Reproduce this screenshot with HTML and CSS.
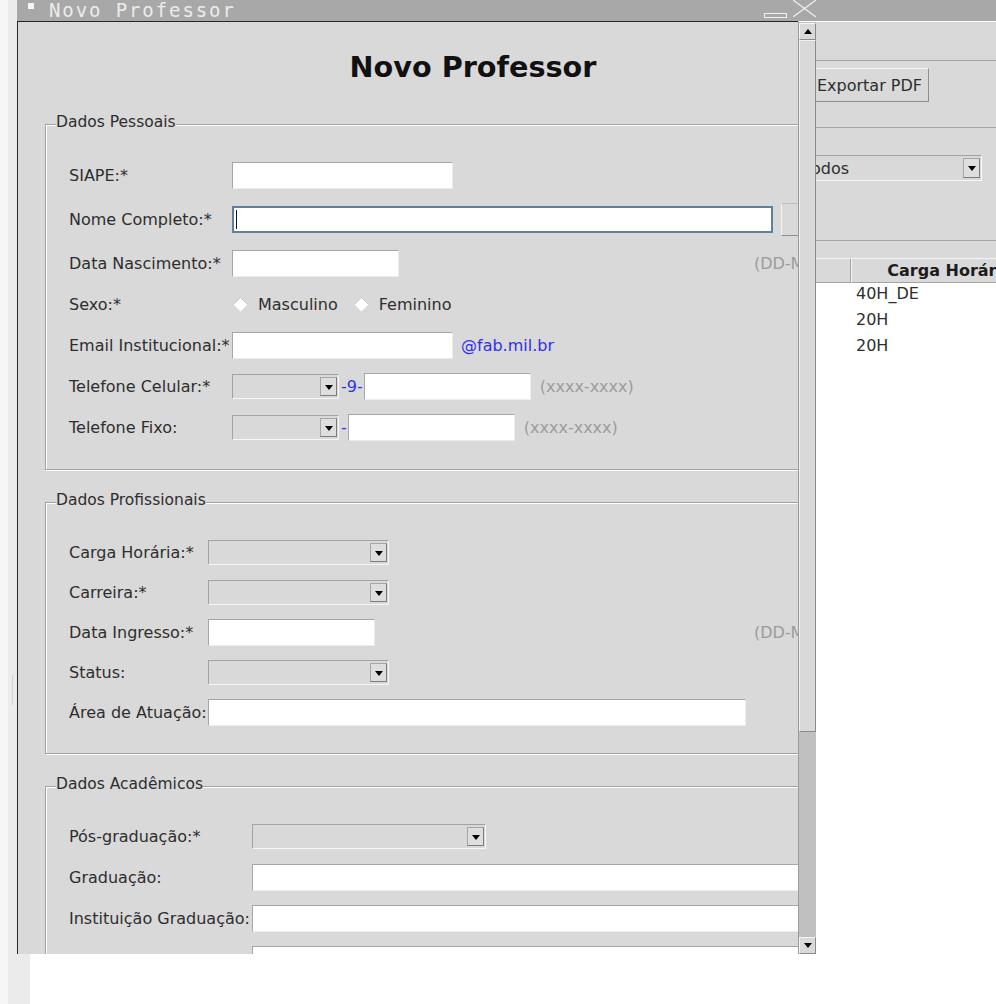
FILE: index.html
```html
<!DOCTYPE html>
<html lang="pt-BR">
<head>
<meta charset="utf-8">
<title>Novo Professor</title>
<link rel="stylesheet" href="styles.css">
</head>
<body>
<div class="desktop">
  <div class="bgapp">
    <div class="bg-side"><span class="grip"></span></div>
    <div class="bg-main">
      <div class="bg-title"></div>
      <div class="bg-panel bg-top"></div>
      <div class="bg-panel bg-actions"><button class="btn">Exportar PDF</button></div>
      <div class="bg-panel bg-filter">
        <div class="combo combo-filter"><span class="combo-text">Todos</span><span class="combo-arrow"></span></div>
      </div>
      <div class="bg-band"></div>
      <div class="thead">
        <div class="th">Nome</div>
        <div class="th">Carga Horária</div>
      </div>
      <div class="tbody">
        <div class="tr"><div class="td"></div><div class="td">40H_DE</div></div>
        <div class="tr"><div class="td"></div><div class="td">20H</div></div>
        <div class="tr"><div class="td"></div><div class="td">20H</div></div>
      </div>
    </div>
  </div>

  <div class="dialog">
    <div class="titlebar">
      <span class="tb-icon"></span>
      <span class="tb-title">Novo Professor</span>
      <span class="tb-controls">
        <svg class="tb-min" width="23" height="5" viewBox="0 0 23 5"><rect x="0.5" y="0.5" width="22" height="4" fill="none" stroke="#f2f2f2" stroke-width="1"/></svg>
        <svg class="tb-close" width="23" height="17" viewBox="0 0 23 17"><path d="M0 0L23 17M23 0L0 17" stroke="#f2f2f2" stroke-width="1.2" fill="none"/></svg>
      </span>
    </div>
    <div class="dlg-body">
      <div class="viewport">
        <div class="form">
          <h1 class="heading">Novo Professor</h1>

          <section class="group group-pessoais">
            <span class="legend">Dados Pessoais</span>
            <div class="rows">
              <div class="row"><span class="label">SIAPE:*</span><span class="field w-221"></span></div>
              <div class="row row-tall"><span class="label">Nome Completo:*</span><span class="field field-focus w-541"><span class="caret"></span></span><span class="side-btn"></span></div>
              <div class="row"><span class="label">Data Nascimento:*</span><span class="field w-167"></span><span class="hint hint-date">(DD-MM-AAAA)</span></div>
              <div class="row">
                <span class="label">Sexo:*</span>
                <span class="radio"><svg width="15" height="15" viewBox="0 0 15 15"><polygon points="7.5,0.5 14.5,7.5 7.5,14.5 0.5,7.5" fill="#fff"/><polyline points="0.5,7.5 7.5,0.5 14.5,7.5" fill="none" stroke="#c9c9c9" stroke-width="1"/></svg>Masculino</span>
                <span class="radio"><svg width="15" height="15" viewBox="0 0 15 15"><polygon points="7.5,0.5 14.5,7.5 7.5,14.5 0.5,7.5" fill="#fff"/><polyline points="0.5,7.5 7.5,0.5 14.5,7.5" fill="none" stroke="#c9c9c9" stroke-width="1"/></svg>Feminino</span>
              </div>
              <div class="row"><span class="label">Email Institucional:*</span><span class="field w-221"></span><span class="domain">@fab.mil.br</span></div>
              <div class="row"><span class="label">Telefone Celular:*</span><span class="combo w-107"><span class="combo-arrow"></span></span><span class="sep">-9-</span><span class="field w-167 after-sep"></span><span class="hint hint-phone">(xxxx-xxxx)</span></div>
              <div class="row"><span class="label">Telefone Fixo:</span><span class="combo w-107"><span class="combo-arrow"></span></span><span class="sep">-</span><span class="field w-167 after-sep"></span><span class="hint hint-phone">(xxxx-xxxx)</span></div>
            </div>
          </section>

          <section class="group group-prof">
            <span class="legend">Dados Profissionais</span>
            <div class="rows">
              <div class="row"><span class="label">Carga Horária:*</span><span class="combo w-181"><span class="combo-arrow"></span></span></div>
              <div class="row"><span class="label">Carreira:*</span><span class="combo w-181"><span class="combo-arrow"></span></span></div>
              <div class="row"><span class="label">Data Ingresso:*</span><span class="field w-167"></span><span class="hint hint-date">(DD-MM-AAAA)</span></div>
              <div class="row"><span class="label">Status:</span><span class="combo w-181"><span class="combo-arrow"></span></span></div>
              <div class="row"><span class="label">Área de Atuação:</span><span class="field w-538"></span></div>
            </div>
          </section>

          <section class="group group-acad">
            <span class="legend">Dados Acadêmicos</span>
            <div class="rows">
              <div class="row"><span class="label">Pós-graduação:*</span><span class="combo w-234"><span class="combo-arrow"></span></span></div>
              <div class="row"><span class="label">Graduação:</span><span class="field grow"></span></div>
              <div class="row"><span class="label">Instituição Graduação:</span><span class="field grow"></span></div>
              <div class="row row-area"><span class="label">Curso Pós-graduação:</span><span class="field field-tall grow"></span></div>
              <div class="row"><span class="label">Instituição Pós:</span><span class="field grow"></span></div>
            </div>
          </section>
        </div>
      </div>
      <div class="scrollbar">
        <span class="sb-btn sb-up"></span>
        <span class="sb-thumb"></span>
        <span class="sb-track"></span>
        <span class="sb-btn sb-down"></span>
      </div>
    </div>
  </div>
</div>
</body>
</html>
```

FILE: styles.css
```css
* { box-sizing: border-box; }
html, body { margin: 0; padding: 0; }
body {
  width: 996px;
  height: 1004px;
  overflow: hidden;
  background: #f6f6f6;
  font-family: "DejaVu Sans", "Liberation Sans", sans-serif;
  font-size: 16px;
  color: #2e2e2e;
}
.desktop {
  position: relative;
  width: 996px;
  height: 1004px;
  overflow: hidden;
  background: #f6f6f6;
}

/* ---------- background application window ---------- */
.bgapp {
  position: absolute;
  left: 8px;
  top: 0;
  right: 0;
  bottom: 0;
  display: flex;
}
.bg-side {
  width: 22px;
  flex: none;
  background: #ebebeb;
  padding: 675px 0 0 4px;
}
.grip { display: block; width: 1px; height: 30px; background: #d2d2d2; }
.bg-main {
  flex: 1;
  min-width: 0;
  background: #fff;
  display: flex;
  flex-direction: column;
  overflow: hidden;
}
.bg-title { height: 21px; flex: none; background: #a8a8a8; }
.bg-panel {
  flex: none;
  background: #d9d9d9;
  border-bottom: 1px solid #a3a3a3;
  display: flex;
  justify-content: flex-end;
  align-items: flex-start;
}
.bg-top { height: 40px; border-top: 1px solid #fff; }
.bg-actions { height: 67px; padding: 7px 67px 0 0; }
.bg-filter { height: 113px; padding: 27px 14px 0 0; }
.bg-band { height: 17px; flex: none; background: #d9d9d9; }

.btn {
  height: 34px;
  margin: 0;
  padding: 0 6px 0 15px;
  background: #d9d9d9;
  border: 1px solid;
  border-color: #f6f6f6 #8e8e8e #8e8e8e #f6f6f6;
  font: 16px "DejaVu Sans", "Liberation Sans", sans-serif;
  color: #2e2e2e;
  white-space: nowrap;
}

.thead, .tr {
  display: grid;
  grid-template-columns: 821px 198px;
  flex: none;
}
.thead { height: 25px; background: #d9d9d9; }
.th {
  border: 1px solid;
  border-color: #f4f4f4 #a3a3a3 #a3a3a3 #f4f4f4;
  font-weight: bold;
  text-align: center;
  line-height: 23px;
  white-space: nowrap;
  overflow: hidden;
  color: #1c1c1c;
}
.tbody { flex: 1; background: #fff; }
.tr { height: 26px; line-height: 22px; }
.td { padding-left: 5px; white-space: nowrap; color: #2e2e2e; }

/* ---------- combo box ---------- */
.combo {
  height: 25px;
  display: flex;
  align-items: center;
  justify-content: flex-end;
  background: #d9d9d9;
  border: 1px solid;
  border-color: #a3a3a3 #f6f6f6 #f6f6f6 #a3a3a3;
  flex: none;
}
.combo-filter {
  width: 185px;
  height: 26px;
  justify-content: space-between;
  padding-left: 6px;
}
.combo-text { white-space: nowrap; }
.combo-arrow {
  align-self: stretch;
  width: 17px;
  margin: 2px 1px 2px 0;
  border: 1px solid;
  border-color: #a6a6a6 #7c7c7c #7c7c7c #a6a6a6;
  background: #dedede;
  display: flex;
  align-items: center;
  justify-content: center;
}
.combo-arrow::after {
  content: "";
  border-left: 4px solid transparent;
  border-right: 4px solid transparent;
  border-top: 5px solid #000;
  margin-top: 1px;
}

/* ---------- dialog window ---------- */
.dialog {
  position: absolute;
  left: 17px;
  top: 0;
  width: 799px;
  height: 954px;
  display: flex;
  flex-direction: column;
}
.titlebar {
  height: 21px;
  flex: none;
  background: #a8a8a8;
  display: flex;
  align-items: flex-start;
  padding-left: 11px;
}
.tb-icon { width: 6px; height: 6px; margin-top: 3px; background: #f6f6f6; flex: none; }
.tb-title {
  margin-left: 15px;
  font-family: "DejaVu Sans Mono", "Liberation Mono", monospace;
  font-size: 19px;
  line-height: 20px;
  letter-spacing: 1.9px;
  color: #ececec;
  white-space: nowrap;
}
.tb-controls { margin-left: auto; display: flex; align-items: flex-start; }
.tb-min { margin-top: 13px; display: block; }
.tb-close { margin-left: 6px; display: block; }

.dlg-body { flex: 1; min-height: 0; display: flex; }
.viewport {
  width: 781px;
  flex: none;
  border-left: 1px solid #262626;
  border-top: 1px solid #262626;
  background: #d9d9d9;
  overflow: hidden;
}
.scrollbar {
  width: 18px;
  flex: none;
  border-left: 1px solid #9a9a9a;
  border-top: 1px solid #fff;
  background: #c0c0c0;
  padding-top: 1px;
  display: flex;
  flex-direction: column;
}
.sb-btn {
  height: 17px;
  flex: none;
  background: #d9d9d9;
  border: 1px solid;
  border-color: #f6f6f6 #8a8a8a #8a8a8a #f6f6f6;
  display: flex;
  align-items: center;
  justify-content: center;
}
.sb-up::after {
  content: "";
  border-left: 4px solid transparent;
  border-right: 4px solid transparent;
  border-bottom: 5px solid #000;
}
.sb-down::after {
  content: "";
  border-left: 4px solid transparent;
  border-right: 4px solid transparent;
  border-top: 5px solid #000;
}
.sb-thumb {
  height: 692px;
  flex: none;
  background: #d9d9d9;
  border: 1px solid;
  border-color: #f0f0f0 #8a8a8a #8a8a8a #f0f0f0;
}
.sb-track { flex: 1; }

/* ---------- form ---------- */
.form { width: 910px; padding-top: 30px; }
.heading {
  margin: 0;
  text-align: center;
  font-size: 28.7px;
  font-weight: bold;
  line-height: 30px;
  color: #111;
}
.group {
  position: relative;
  margin: 42px 27px 0;
  border: 1px solid #a3a3a3;
  box-shadow: inset 1px 1px 0 #fff, 1px 1px 0 #fff;
  padding: 37px 23px 28px;
}
.group + .group { margin-top: 32px; }
.group-prof { padding-top: 36px; padding-bottom: 27px; }
.group-acad { padding-top: 36px; }
.legend {
  position: absolute;
  top: -12px;
  left: 10px;
  font-size: 15.5px;
  line-height: 19px;
  background: #d9d9d9;
  white-space: nowrap;
}
.rows { display: flex; flex-direction: column; gap: 14px; }
.group-prof .rows { gap: 13px; }

.row { display: flex; align-items: center; height: 27px; }
.row-tall { height: 33px; }
.row-area { height: 32px; }
.label { flex: none; white-space: nowrap; }
.group-pessoais .label { width: 163px; }
.group-prof .label { width: 139px; }
.group-acad .label { width: 183px; }

.field {
  display: block;
  flex: none;
  height: 27px;
  background: #fff;
  border: 1px solid;
  border-color: #a6a6a6 #ececec #ececec #a6a6a6;
}
.field-tall { height: 32px; }
.field-focus {
  border: 2px solid #5f7f9e;
  padding: 2px 0 0 2px;
}
.caret { display: block; width: 1px; height: 19px; background: #111; }
.grow { flex: 1; }
.w-107 { width: 107px; }
.w-167 { width: 167px; }
.w-181 { width: 181px; }
.w-221 { width: 221px; }
.w-234 { width: 234px; }
.w-538 { width: 538px; }
.w-541 { width: 541px; }

.side-btn {
  flex: none;
  width: 90px;
  height: 33px;
  margin-left: 8px;
  background: #d9d9d9;
  border: 1px solid;
  border-color: #bdbdbd #8e8e8e #8e8e8e #f4f4f4;
}
.hint { color: #9c9c9c; white-space: nowrap; }
.hint-date { margin-left: auto; margin-right: 2px; }
.hint-phone { margin-left: 9px; }
.domain { margin-left: 8px; color: #3030f0; white-space: nowrap; }
.sep { margin-left: 2px; color: #3030f0; white-space: nowrap; }
.after-sep { margin-left: 1px; }

.radio { display: flex; align-items: center; gap: 10px; white-space: nowrap; }
.radio svg { display: block; flex: none; }
.label + .radio { margin-left: 1px; }
.radio + .radio { margin-left: 16px; }
```
